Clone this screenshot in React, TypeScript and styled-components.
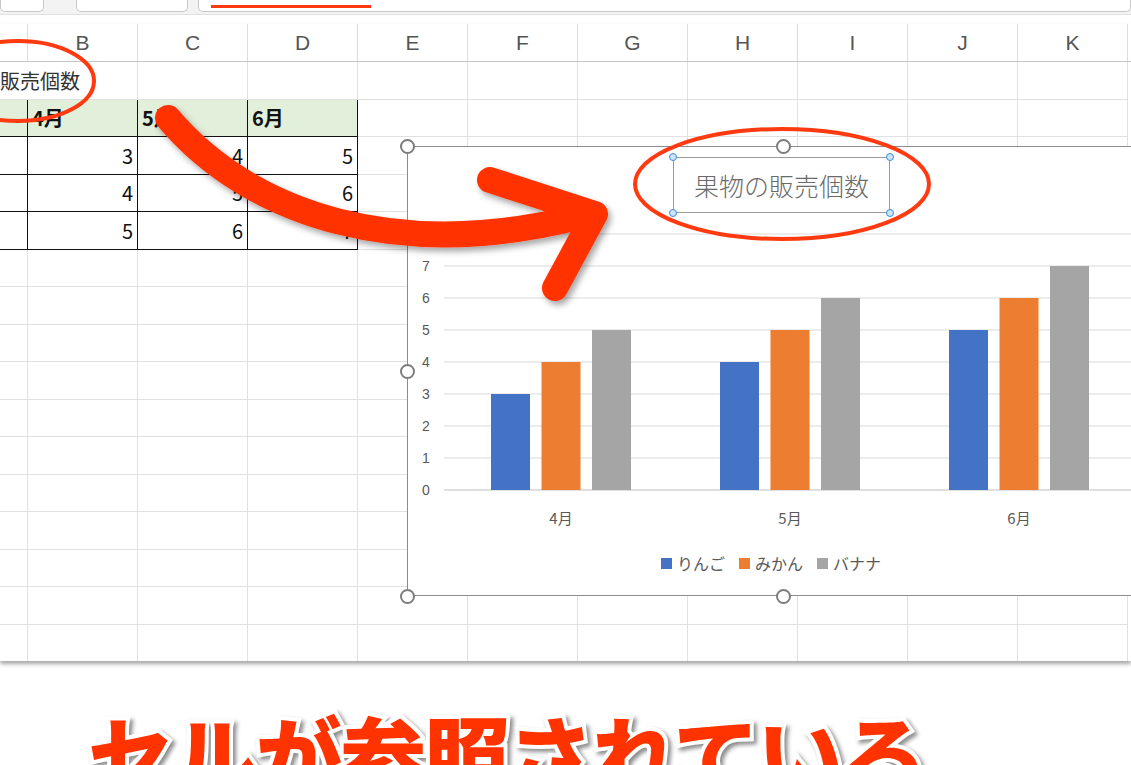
import React from 'react'
import styled, { createGlobalStyle } from 'styled-components'

const Global = createGlobalStyle`
  html, body { margin: 0; padding: 0; background: #fff; overflow: hidden; }
  body { font-family: "Noto Sans CJK JP", "Noto Sans", sans-serif; }
`

const COLS = ['', 'B', 'C', 'D', 'E', 'F', 'G', 'H', 'I', 'J', 'K']
const colTemplate = '28px repeat(10, 110px)'

const Page = styled.div`
  width: 1131px;
  height: 765px;
  position: relative;
  overflow: hidden;
`

const Toolbar = styled.div`
  height: 14px;
  display: flex;
  gap: 10px;
  background: #f3f3f3;
  border-bottom: 1px solid #e0e0e0;
`

const ToolBtn = styled.div<{ w: number; ml?: number }>`
  width: ${({ w }) => w}px;
  margin-left: ${({ ml }) => ml ?? 0}px;
  height: 11px;
  background: #fff;
  border: 1px solid #c8c8c8;
  border-top: none;
  border-radius: 0 0 5px 5px;
  position: relative;
`

const Underline = styled.div`
  position: absolute;
  left: 12px;
  top: 5px;
  width: 160px;
  height: 3px;
  background: #ff3a10;
`

const Sheet = styled.div`
  position: relative;
  margin-top: 9px;
  height: 637px;
  overflow: hidden;
  box-shadow: 0 3px 4px rgba(0, 0, 0, 0.35);
`

const HeaderRow = styled.div`
  display: grid;
  grid-template-columns: ${colTemplate};
  height: 37px;
  background: #fff;
  border-bottom: 1px solid #c6c6c6;
`

const HeaderCell = styled.div`
  display: flex;
  align-items: center;
  justify-content: center;
  font-family: "Liberation Sans", "Noto Sans", sans-serif;
  font-size: 21px;
  color: #555;
  border-right: 1px solid #dcdcdc;
`

const Row = styled.div`
  display: grid;
  grid-template-columns: ${colTemplate};
  height: 37.5px;
`

const Cell = styled.div<{ head?: boolean; boxed?: boolean; right?: boolean }>`
  box-sizing: border-box;
  display: flex;
  align-items: center;
  justify-content: ${({ right }) => (right ? 'flex-end' : 'flex-start')};
  padding: 0 4px;
  font-size: 20px;
  white-space: nowrap;
  color: #111;
  font-weight: ${({ head }) => (head ? 700 : 400)};
  background: ${({ head }) => (head ? '#e2efda' : '#fff')};
  border-right: 1px solid ${({ boxed }) => (boxed ? '#111' : '#e1e1e1')};
  border-bottom: 1px solid ${({ boxed }) => (boxed ? '#111' : '#e1e1e1')};
`

const TitleCell = styled(Cell)`
  grid-column: span 2;
  color: #333;
  padding: 0;
`

const Chart = styled.div`
  position: absolute;
  left: 407px;
  top: 122px;
  width: 740px;
  height: 450px;
  background: #fff;
  border: 1px solid #8c8c8c;
  box-sizing: border-box;
`

const Handle = styled.div<{ x: number; y: number }>`
  position: absolute;
  left: ${({ x }) => x - 7}px;
  top: ${({ y }) => y - 7}px;
  width: 11px;
  height: 11px;
  border: 2px solid #7d7d7d;
  border-radius: 50%;
  background: #fff;
`

const TitleBox = styled.div`
  position: absolute;
  left: 265px;
  top: 10px;
  width: 217px;
  height: 56px;
  border: 1px solid #9a9a9a;
  box-sizing: border-box;
  display: flex;
  align-items: center;
  justify-content: center;
  font-size: 25px;
  font-weight: 300;
  color: #6a6a6a;
`

const Dot = styled.div<{ x: number; y: number }>`
  position: absolute;
  left: ${({ x }) => x - 4}px;
  top: ${({ y }) => y - 4}px;
  width: 6px;
  height: 6px;
  border: 1px solid #3b8be0;
  background: #cfe4fb;
  border-radius: 50%;
`

const Legend = styled.div`
  position: absolute;
  left: 253px;
  top: 404px;
  display: flex;
  gap: 14px;
  font-size: 16px;
  color: #595959;
`

const LegendItem = styled.div`
  display: flex;
  align-items: center;
  gap: 5px;
`

const Swatch = styled.span<{ c: string }>`
  width: 11px;
  height: 11px;
  background: ${({ c }) => c};
`

const Caption = styled.div`
  position: absolute;
  left: 88px;
  top: 690px;
  font-size: 86px;
  font-weight: 900;
  letter-spacing: -2px;
  color: #ff3300;
  -webkit-text-stroke: 8px #fff;
  paint-order: stroke fill;
  filter: drop-shadow(3px 3px 2px rgba(0, 0, 0, 0.45));
  white-space: nowrap;
`

const Overlay = styled.svg`
  position: absolute;
  left: 0;
  top: 0;
  pointer-events: none;
`

const COLORS = ['#4472c4', '#ed7d31', '#a5a5a5']
const DATA = [
  [3, 4, 5],
  [4, 5, 6],
  [5, 6, 7],
]
const MONTHS = ['4月', '5月', '6月']

function Plot() {
  const base = 343
  const step = 32
  return (
    <svg width={740} height={400} style={{ position: 'absolute', left: 0, top: 0 }}>
      {Array.from({ length: 9 }, (_, i) => (
        <g key={i}>
          <line x1={36} x2={740} y1={base - i * step} y2={base - i * step} stroke={i === 0 ? '#bfbfbf' : '#d9d9d9'} />
          <text x={18} y={base - i * step + 5} fontSize={14} fill="#595959" textAnchor="middle" fontFamily="Liberation Sans, sans-serif">
            {i}
          </text>
        </g>
      ))}
      {DATA.map((vals, c) => (
        <g key={c}>
          {vals.map((v, s) => (
            <rect key={s} x={83 + c * 229 + s * 50.5} y={base - v * step} width={39} height={v * step} fill={COLORS[s]} />
          ))}
          <text x={153 + c * 229} y={377} fontSize={15} fill="#595959" textAnchor="middle">
            {MONTHS[c]}
          </text>
        </g>
      ))}
    </svg>
  )
}

export default function App() {
  const rows = Array.from({ length: 16 }, (_, i) => i)
  const table: Record<number, { cells: string[]; head?: boolean }> = {
    1: { cells: ['', '4月', '5月', '6月'], head: true },
    2: { cells: ['', '3', '4', '5'] },
    3: { cells: ['', '4', '5', '6'] },
    4: { cells: ['', '5', '6', '7'] },
  }
  return (
    <Page>
      <Global />
      <Toolbar>
        <ToolBtn w={42} />
        <ToolBtn w={112} ml={22} />
        <ToolBtn w={940}>
          <Underline />
        </ToolBtn>
      </Toolbar>
      <Sheet>
        <HeaderRow>
          {COLS.map((c, i) => (
            <HeaderCell key={i}>{c}</HeaderCell>
          ))}
        </HeaderRow>
        {rows.map((r) => (
          <Row key={r}>
            {r === 0 && <TitleCell>販売個数</TitleCell>}
            {COLS.map((_, ci) => {
              if (r === 0 && ci < 2) return null
              const t = table[r]
              if (t && ci <= 3)
                return (
                  <Cell key={ci} boxed head={t.head} right={!t.head}>
                    {t.cells[ci]}
                  </Cell>
                )
              return <Cell key={ci} />
            })}
          </Row>
        ))}
        <Chart>
          <Plot />
          <TitleBox>果物の販売個数</TitleBox>
          <Dot x={265} y={10} />
          <Dot x={482} y={10} />
          <Dot x={265} y={66} />
          <Dot x={482} y={66} />
          <Legend>
            <LegendItem>
              <Swatch c={COLORS[0]} />
              りんご
            </LegendItem>
            <LegendItem>
              <Swatch c={COLORS[1]} />
              みかん
            </LegendItem>
            <LegendItem>
              <Swatch c={COLORS[2]} />
              バナナ
            </LegendItem>
          </Legend>
        </Chart>
        <Handle x={407} y={122} />
        <Handle x={783} y={122} />
        <Handle x={407} y={347} />
        <Handle x={407} y={572} />
        <Handle x={783} y={572} />
      </Sheet>
      <Overlay width={1131} height={765}>
        <defs>
          <filter id="sh" x="-20%" y="-20%" width="140%" height="140%">
            <feDropShadow dx="3" dy="4" stdDeviation="3" floodColor="#000" floodOpacity="0.35" />
          </filter>
        </defs>
        <ellipse cx={18} cy={81} rx={76} ry={40} fill="none" stroke="#ff3a10" strokeWidth={4} />
        <ellipse cx={782} cy={184} rx={147} ry={55} fill="none" stroke="#ff3a10" strokeWidth={4} />
        <g filter="url(#sh)" stroke="#ff3300" strokeWidth={26} strokeLinecap="round" strokeLinejoin="round" fill="none">
          <path d="M168 118 C 250 215, 400 265, 590 214" />
          <path d="M490 180 L 595 214 L 555 288" />
        </g>
      </Overlay>
      <Caption>セルが参照されている</Caption>
    </Page>
  )
}
